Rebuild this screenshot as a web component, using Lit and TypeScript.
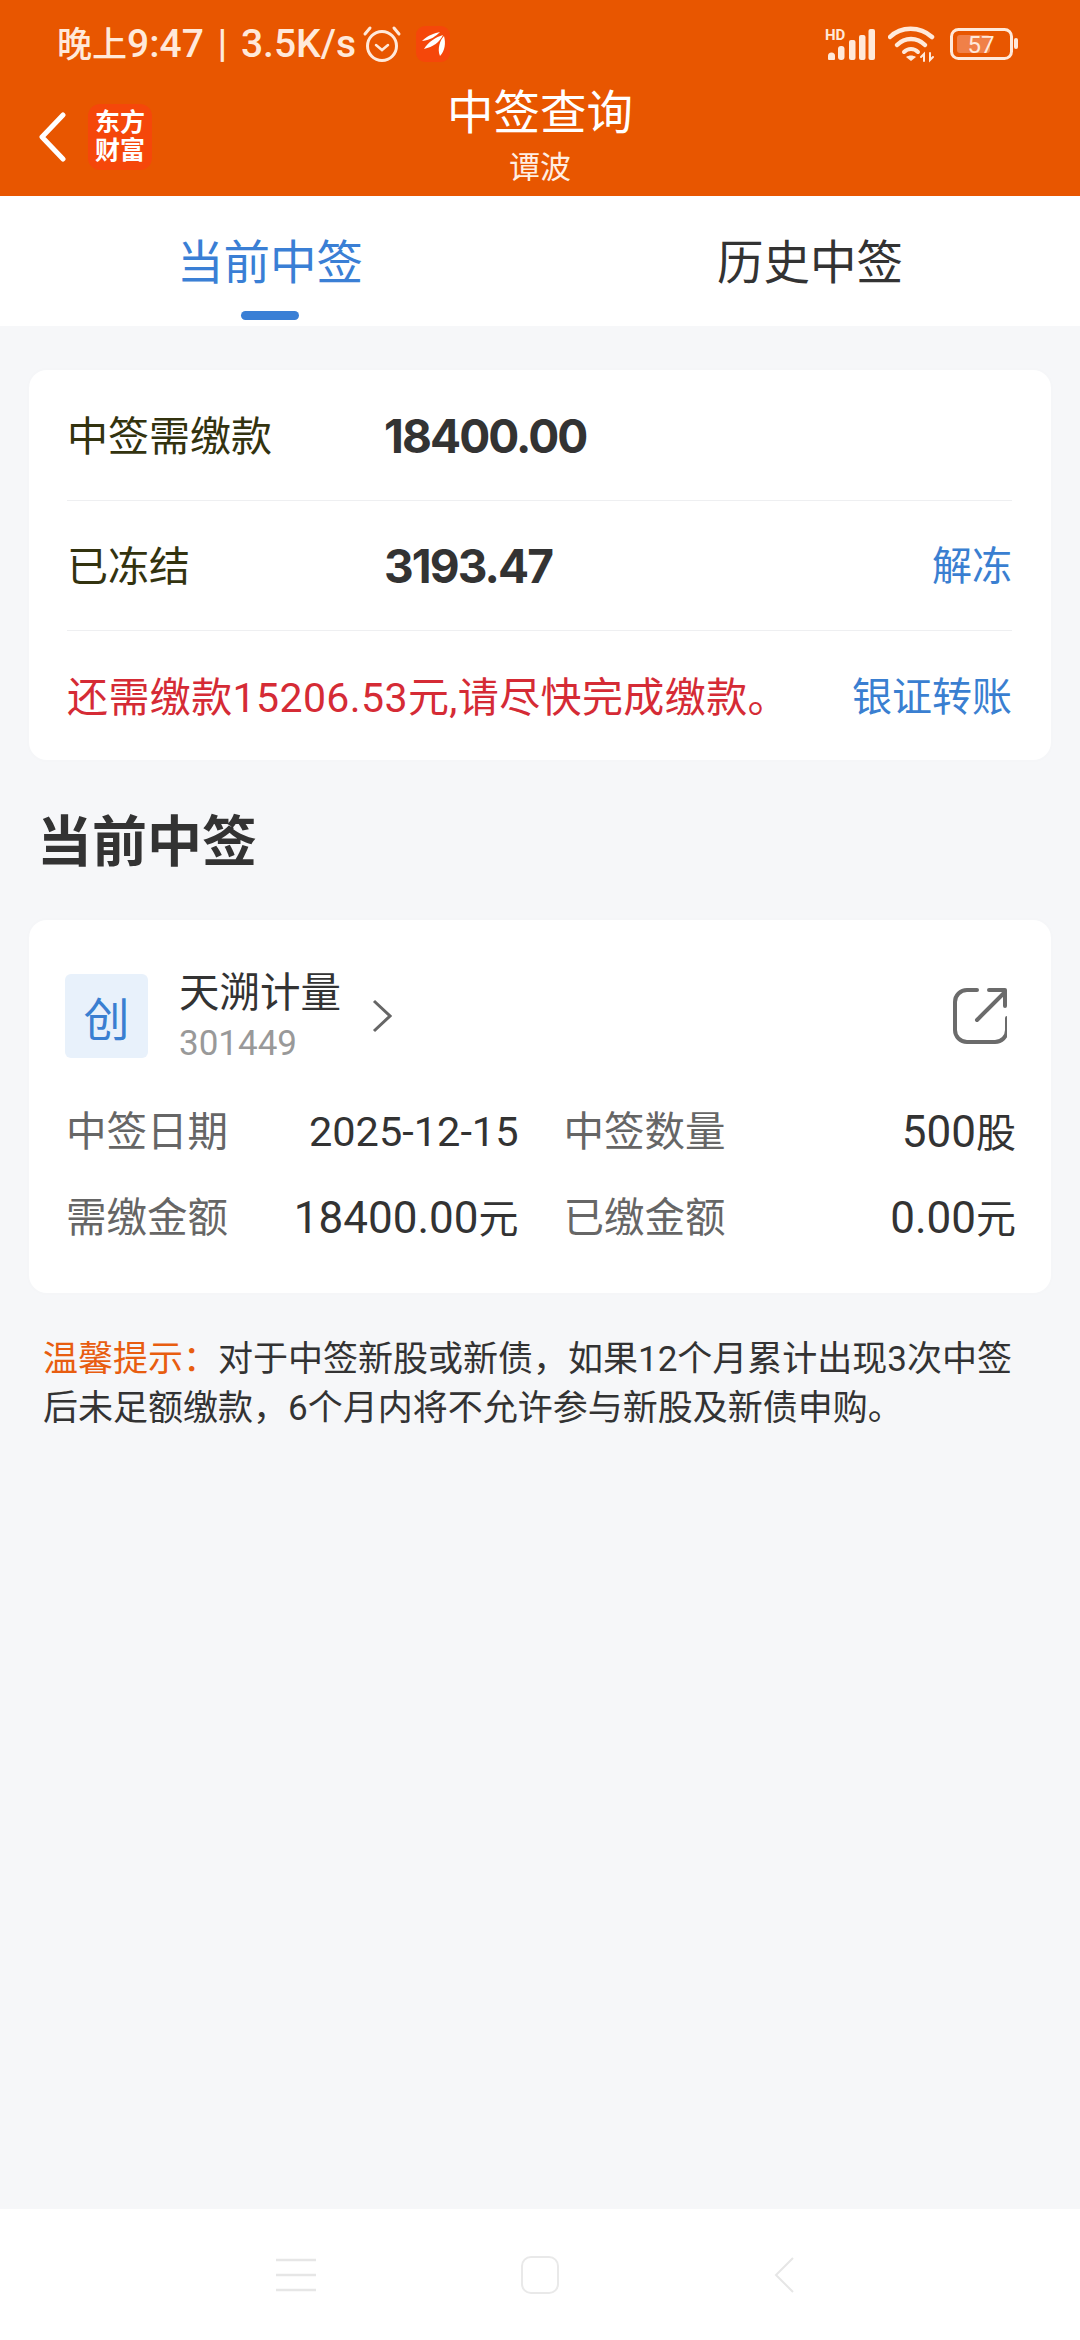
import { LitElement, html, css, nothing } from "lit";
import { customElement } from "lit/decorators.js";

const FONT = `Roboto, "Noto Sans CJK SC", sans-serif`;

@customElement("app-root")
export class AppRoot extends LitElement {
  static styles = css`
    :host {
      display: block;
      width: 1080px;
      font-family: Roboto, "Noto Sans CJK SC", sans-serif;
      color: #333;
    }

    .page {
      display: flex;
      flex-direction: column;
      min-height: 2340px;
      background: #f6f7f9;
    }

    /* orange top block */
    .top {
      background: #e85600;
      height: 196px;
      color: #fff;
    }

    .status {
      height: 86px;
      display: flex;
      align-items: center;
      justify-content: space-between;
      padding: 0 62px 0 57px;
      color: #ffe9da;
    }

    .status-left {
      display: flex;
      align-items: center;
      font-size: 39px;
      font-weight: 500;
      white-space: nowrap;
      word-spacing: 4px;
    }

    .status-left > span {
      margin-bottom: 3px;
    }

    .status-left .cn {
      font-size: 35px;
    }

    .status-left .clock {
      margin: 2px 0 0 6px;
    }

    .status-left .app {
      margin: 2px 0 0 14px;
    }

    .status-right {
      display: flex;
      align-items: center;
      padding-top: 2px;
    }

    .titlebar {
      display: grid;
      grid-template-columns: 1fr auto 1fr;
      height: 110px;
    }

    .back {
      display: flex;
      align-items: center;
      gap: 22px;
      padding: 0 0 8px 39px;
    }

    .logo {
      width: 64px;
      height: 66px;
      border-radius: 12px;
      background: #f5470a;
      font-size: 25px;
      font-weight: 700;
      line-height: 28px;
      text-align: center;
      display: flex;
      align-items: center;
      justify-content: center;
    }

    .title {
      text-align: center;
    }

    .title .main {
      font-size: 46.5px;
      line-height: 54px;
    }

    .title .sub {
      font-size: 31px;
      line-height: 56px;
      color: #ffeee3;
    }

    .tabs {
      display: grid;
      grid-template-columns: 1fr 1fr;
      background: #fff;
      height: 130px;
    }

    .tab {
      display: flex;
      flex-direction: column;
      align-items: center;
      padding-top: 36px;
      font-size: 46.5px;
      line-height: 62px;
      color: #333;
    }

    .tab.active {
      color: #3a7fd5;
    }

    .tab i {
      display: block;
      width: 58px;
      height: 9px;
      margin-top: 17px;
      border-radius: 5px;
    }

    .tab.active i {
      background: #3a7fd5;
    }

    .content {
      flex: 1;
      padding: 44px 29px 0;
    }

    .card {
      background: #fff;
      border-radius: 18px;
      box-shadow: 0 0 6px rgba(0, 0, 0, 0.015);
    }

    .pay {
      padding: 1px 39px 0 38px;
      height: 390px;
      box-sizing: border-box;
    }

    .pay-row {
      box-sizing: border-box;
      height: 130px;
      padding-bottom: 5px;
      display: flex;
      align-items: center;
      border-bottom: 1px solid #eeeff1;
      font-size: 41px;
    }

    .pay-row:last-child {
      border-bottom: none;
    }

    .pay-label {
      width: 317px;
      color: #33330f;
    }

    .pay-value {
      flex: 1;
      margin-top: 6px;
      font-family: Inter, sans-serif;
      font-size: 46px;
      font-weight: 700;
      letter-spacing: -1.9px;
      color: #333;
    }

    .link {
      font-size: 40px;
      color: #3a7fd1;
    }

    .warn {
      flex: 1;
      letter-spacing: 0.4px;
      color: #d52b35;
    }

    .section {
      margin: 50px 0 46px 8px;
      font-size: 55px;
      font-weight: 700;
      line-height: 64px;
      color: #333;
    }

    .stock {
      padding: 54px 35px 50px 40px;
    }

    .stock-head {
      display: flex;
      height: 84px;
    }

    .badge {
      width: 83px;
      height: 84px;
      margin-left: -4px;
      border-radius: 6px;
      background: #e8f1fb;
      color: #3a7fd1;
      font-size: 46px;
      display: flex;
      align-items: center;
      justify-content: center;
    }

    .names {
      margin-left: 31px;
    }

    .name {
      margin-top: 1px;
      font-size: 40.5px;
      line-height: 36px;
      color: #333;
      white-space: nowrap;
    }

    .code {
      margin-top: 15px;
      font-size: 35px;
      line-height: 36px;
      color: #999;
    }

    .chev {
      margin: 25px 0 0 31px;
    }

    .jump {
      margin: 14px 9px 0 auto;
    }

    .details {
      display: grid;
      grid-template-columns: 1fr 1fr;
      column-gap: 45px;
      row-gap: 36px;
      margin: 49px 0 0 -3px;
      font-size: 40.5px;
      line-height: 50px;
    }

    .detail {
      display: flex;
      justify-content: space-between;
      height: 50px;
      color: #333;
    }

    .detail .label {
      color: #666;
    }

    .detail .num {
      font-size: 44px;
    }

    .detail .num.date {
      font-size: 41.5px;
    }

    .detail .unit {
      font-size: 40px;
    }

    .tip {
      margin: 42px 0 0 14px;
      font-size: 35px;
      line-height: 49px;
      color: #333;
      white-space: nowrap;
    }

    .tip b {
      font-weight: 400;
      color: #e85d10;
    }

    .nav {
      height: 131px;
      background: #fff;
      display: grid;
      grid-template-columns: repeat(3, 244px);
      justify-content: center;
      justify-items: center;
      align-items: center;
    }
  `;

  private renderStatus() {
    return html`
      <div class="status">
        <div class="status-left">
          <span><span class="cn">晚上</span>9:47 | 3.5K/s</span>
          <svg class="clock" width="40" height="40" viewBox="0 0 40 40" fill="none" stroke="#ffe9da" stroke-width="3" stroke-linecap="round">
            <circle cx="20" cy="22" r="14.5"></circle>
            <path d="M3 10 8 4M37 10 32 4"></path>
            <path d="M14 21l6 5 6-5" stroke-width="2.5"></path>
          </svg>
          <svg class="app" width="34" height="36" viewBox="0 0 34 36">
            <rect width="34" height="36" rx="9" fill="#f5470a"></rect>
            <path d="M6 15C12 9 19 7 24 6 20 10 15 14 6 15ZM8 23C12 16 20 11 27 9 24 16 17 21 8 23ZM24 30C21 23 24 14 28 10 30 17 29 25 24 30Z" fill="#fff"></path>
          </svg>
        </div>
        <div class="status-right">
          <svg width="50" height="34" viewBox="0 0 50 34">
            <text x="0" y="13" font-size="15" font-weight="700" fill="#ffe9da" font-family=${FONT}>HD</text>
            <g fill="#ffe9da">
              <path d="M3 32v-3a3.5 3.5 0 0 1 7 0v3a1 1 0 0 1-1 1H4a1 1 0 0 1-1-1Z"></path>
              <rect x="13" y="19" width="6.5" height="14" rx="3"></rect>
              <rect x="24" y="13" width="6.5" height="20" rx="2"></rect>
              <rect x="34" y="8" width="6.5" height="25" rx="2"></rect>
              <rect x="43.5" y="2" width="6.5" height="31" rx="2"></rect>
            </g>
          </svg>
          <svg style="margin-left:13px" width="48" height="38" viewBox="0 0 48 38" fill="none" stroke="#ffe9da" stroke-width="4.5" stroke-linecap="round">
            <path d="M2 12C13 1 32 1 44 12"></path>
            <path d="M9 20C17 12 29 12 37 20"></path>
            <path d="M16 27C20 23 26 23 30 27" stroke-width="4"></path>
            <path d="M23 36l-5-4c3-2 7-2 10 0Z" fill="#ffe9da" stroke="none"></path>
            <path d="M36 36v-7l-3 3M42 28v7l3-3" stroke-width="2"></path>
          </svg>
          <svg style="margin-left:14px" width="68" height="32" viewBox="0 0 68 32">
            <rect x="1.5" y="1.5" width="60" height="29" rx="7" fill="none" stroke="#ffe9da" stroke-width="3"></rect>
            <rect x="7" y="7" width="33" height="18" rx="3" fill="#f08048"></rect>
            <text x="31" y="24.5" text-anchor="middle" font-size="24" fill="#ffe9da" font-family=${FONT}>57</text>
            <rect x="64" y="10" width="4" height="11" rx="2" fill="#ffe9da"></rect>
          </svg>
        </div>
      </div>
    `;
  }

  private renderDetail(label: string, value: string, unit?: string, date = false) {
    return html`
      <div class="detail">
        <span class="label">${label}</span>
        <span><span class="num ${date ? "date" : ""}">${value}</span>${unit
            ? html`<span class="unit">${unit}</span>`
            : nothing}</span>
      </div>
    `;
  }

  render() {
    return html`
      <div class="page">
        <div class="top">
          ${this.renderStatus()}
          <div class="titlebar">
            <div class="back">
              <svg width="27" height="50" viewBox="0 0 27 50" fill="none" stroke="#fff" stroke-width="5" stroke-linecap="round" stroke-linejoin="round">
                <path d="M24 3 3 25l21 22"></path>
              </svg>
              <div class="logo"><span>东方<br />财富</span></div>
            </div>
            <div class="title">
              <div class="main">中签查询</div>
              <div class="sub">谭波</div>
            </div>
          </div>
        </div>

        <div class="tabs">
          <div class="tab active">当前中签<i></i></div>
          <div class="tab">历史中签<i></i></div>
        </div>

        <div class="content">
          <div class="card pay">
            <div class="pay-row">
              <span class="pay-label">中签需缴款</span>
              <span class="pay-value">18400.00</span>
            </div>
            <div class="pay-row">
              <span class="pay-label">已冻结</span>
              <span class="pay-value">3193.47</span>
              <span class="link">解冻</span>
            </div>
            <div class="pay-row">
              <span class="warn">还需缴款15206.53元,请尽快完成缴款。</span>
              <span class="link">银证转账</span>
            </div>
          </div>

          <div class="section">当前中签</div>

          <div class="card stock">
            <div class="stock-head">
              <div class="badge">创</div>
              <div class="names">
                <div class="name">天溯计量</div>
                <div class="code">301449</div>
              </div>
              <svg class="chev" width="20" height="34" viewBox="0 0 20 34" fill="none" stroke="#666" stroke-width="3">
                <path d="M2 2l16 15L2 32"></path>
              </svg>
              <svg class="jump" width="54" height="56" viewBox="0 0 54 56" fill="none" stroke="#6b6b6b" stroke-width="4" stroke-linecap="round" stroke-linejoin="round">
                <path d="M24 2H14A12 12 0 0 0 2 14v28a12 12 0 0 0 12 12h28a12 12 0 0 0 12-12V30"></path>
                <path d="M24 32 52 4"></path>
                <path d="M36 2h16v16"></path>
              </svg>
            </div>
            <div class="details">
              ${this.renderDetail("中签日期", "2025-12-15", undefined, true)}
              ${this.renderDetail("中签数量", "500", "股")}
              ${this.renderDetail("需缴金额", "18400.00", "元")}
              ${this.renderDetail("已缴金额", "0.00", "元")}
            </div>
          </div>

          <div class="tip">
            <b>温馨提示：</b>对于中签新股或新债，如果12个月累计出现3次中签<br />后未足额缴款，6个月内将不允许参与新股及新债申购。
          </div>
        </div>

        <div class="nav">
          <svg width="42" height="36" viewBox="0 0 42 36" fill="none" stroke="#e6e6e6" stroke-width="2.5">
            <path d="M1 3h40M1 18h40M1 33h40"></path>
          </svg>
          <svg width="40" height="40" viewBox="0 0 40 40" fill="none" stroke="#e9e9e9" stroke-width="2">
            <rect x="2" y="2" width="36" height="36" rx="9"></rect>
          </svg>
          <svg width="22" height="38" viewBox="0 0 22 38" fill="none" stroke="#e6e6e6" stroke-width="2">
            <path d="M20 2 3 19l17 17"></path>
          </svg>
        </div>
      </div>
    `;
  }
}
